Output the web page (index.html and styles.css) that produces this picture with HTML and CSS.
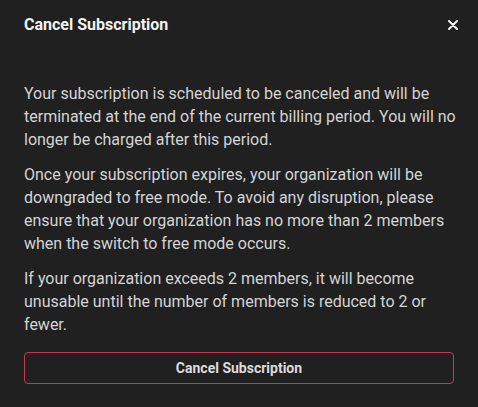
FILE: index.html
```html
<!DOCTYPE html>
<html lang="en">
<head>
<meta charset="utf-8">
<title>Cancel Subscription</title>
<link rel="stylesheet" href="styles.css">
</head>
<body>
<div class="dialog">
  <header class="dialog-header">
    <h2 class="dialog-title">Cancel Subscription</h2>
    <button class="close-btn" aria-label="Close">
      <svg width="10" height="10" viewBox="0 0 10 10"><path d="M1 1L9 9M9 1L1 9" stroke="#f2f2f2" stroke-width="2" stroke-linecap="round"/></svg>
    </button>
  </header>
  <div class="dialog-body">
    <p>Your subscription is scheduled to be canceled and will be terminated at the end of the current billing period. You will no longer be charged after this period.</p>
    <p>Once your subscription expires, your organization will be downgraded to free mode. To avoid any disruption, please ensure that your organization has no more than 2 members when the switch to free mode occurs.</p>
    <p>If your organization exceeds 2 members, it will become unusable until the number of members is reduced to 2 or fewer.</p>
  </div>
  <footer class="dialog-footer">
    <button class="cancel-btn">Cancel Subscription</button>
  </footer>
</div>
</body>
</html>
```
FILE: styles.css
```css
* { box-sizing: border-box; }
html, body {
  margin: 0;
  padding: 0;
  background: #202020;
  height: 100%;
}
body {
  font-family: Roboto, "Liberation Sans", sans-serif;
}
.dialog {
  width: 478px;
  height: 407px;
  background: #202020;
  border-radius: 8px;
  display: flex;
  flex-direction: column;
}
.dialog-header {
  display: flex;
  align-items: center;
  justify-content: space-between;
  padding: 15px 16px 11px 24px;
}
.dialog-title {
  margin: 0;
  font-size: 16px;
  line-height: 20px;
  font-weight: 700;
  color: #f2f2f2;
}
.close-btn {
  background: none;
  border: none;
  padding: 4px;
  display: flex;
  cursor: pointer;
}
.dialog-body {
  padding: 36px 16px 0 24px;
  color: #d4d4d4;
  font-size: 16px;
  line-height: 23px;
}
.dialog-body p {
  margin: 0 0 12px 0;
}
.dialog-body p:last-child { margin-bottom: 0; }
.dialog-footer {
  padding: 16px 24px 0 24px;
}
.cancel-btn {
  width: 100%;
  height: 32px;
  background: transparent;
  border: 1px solid #c8375a;
  border-radius: 4px;
  color: #dcdcdc;
  font-family: Roboto, "Liberation Sans", sans-serif;
  font-size: 14px;
  font-weight: 700;
  cursor: pointer;
}
```
